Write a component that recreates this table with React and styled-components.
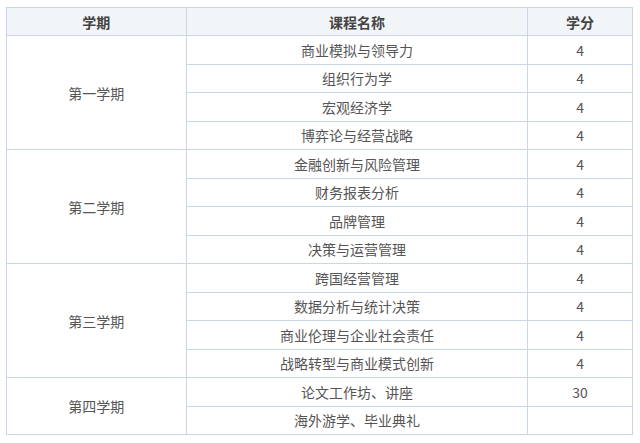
import React from 'react';
import styled, { createGlobalStyle } from 'styled-components';

const GlobalStyle = createGlobalStyle`
  body {
    margin: 0;
    background: #ffffff;
    font-family: 'Noto Sans CJK SC', 'Noto Sans', sans-serif;
  }
`

const Page = styled.div`
  padding: 7px 7px 0 6px;
`

const Table = styled.table`
  width: 627px;
  border-collapse: collapse;
  font-size: 14px;
  color: #555;
`

const HeadCell = styled.th`
  height: 28px;
  padding: 0;
  background: #f2f5f8;
  border: 1px solid #c9d6e8;
  font-weight: bold;
  color: #444;
  text-align: center;
  box-sizing: border-box;
  width: ${p => p.w};
`

const Cell = styled.td`
  height: 28.5px;
  padding: 0;
  border: 1px solid #c9d6e8;
  text-align: center;
  box-sizing: border-box;
  line-height: 1;
`

const semesters = [
  {
    name: '第一学期',
    courses: [
      ['商业模拟与领导力', '4'],
      ['组织行为学', '4'],
      ['宏观经济学', '4'],
      ['博弈论与经营战略', '4'],
    ],
  },
  {
    name: '第二学期',
    courses: [
      ['金融创新与风险管理', '4'],
      ['财务报表分析', '4'],
      ['品牌管理', '4'],
      ['决策与运营管理', '4'],
    ],
  },
  {
    name: '第三学期',
    courses: [
      ['跨国经营管理', '4'],
      ['数据分析与统计决策', '4'],
      ['商业伦理与企业社会责任', '4'],
      ['战略转型与商业模式创新', '4'],
    ],
  },
  {
    name: '第四学期',
    courses: [
      ['论文工作坊、讲座', '30'],
      ['海外游学、毕业典礼', ''],
    ],
  },
]

const App = () => {
  return (
    <Page>
      <GlobalStyle />
      <Table>
        <thead>
          <tr>
            <HeadCell w="180px">学期</HeadCell>
            <HeadCell w="342px">课程名称</HeadCell>
            <HeadCell w="105px">学分</HeadCell>
          </tr>
        </thead>
        <tbody>
          {semesters.map(sem =>
            sem.courses.map((course, idx) => (
              <tr key={sem.name + idx}>
                {idx === 0 && <Cell rowSpan={sem.courses.length}>{sem.name}</Cell>}
                <Cell>{course[0]}</Cell>
                <Cell>{course[1]}</Cell>
              </tr>
            ))
          )}
        </tbody>
      </Table>
    </Page>
  )
}

export default App;
